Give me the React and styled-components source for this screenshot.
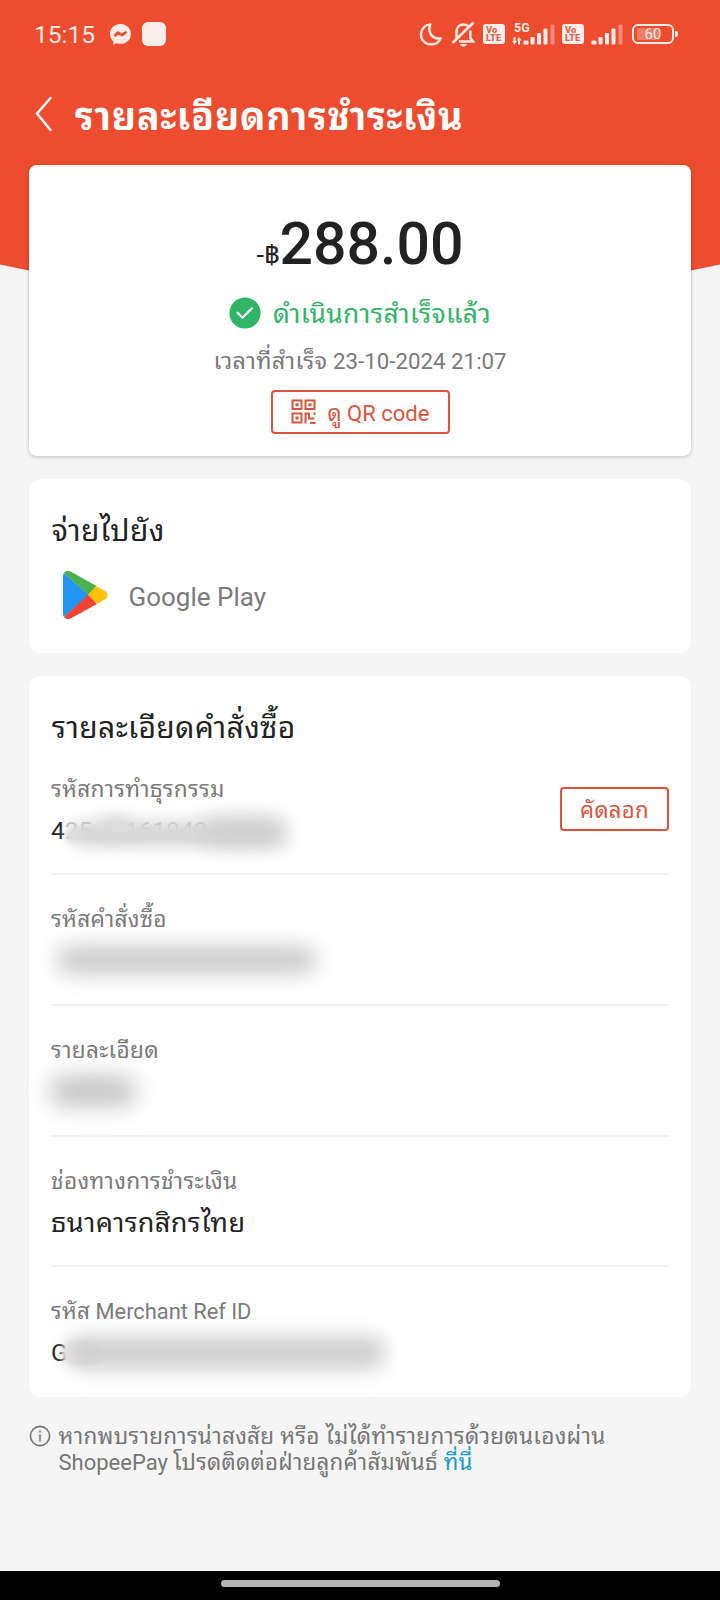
import React from "react";
import styled, { createGlobalStyle } from "styled-components";

const GlobalStyle = createGlobalStyle`
  * { box-sizing: border-box; }
  body {
    margin: 0;
    background: #f5f5f5;
    font-family: Roboto, "Noto Sans Thai Looped", "Noto Sans Thai", "Noto Sans", sans-serif;
    color: #222;
  }
`;

const Screen = styled.div`
  width: 720px;
  height: 1600px;
  display: flex;
  flex-direction: column;
  overflow: hidden;
  background: #f5f5f5;
`;

const Header = styled.header`
  height: 165px;
  background: #ed4c2e;
  color: #fff;
`;

const StatusBar = styled.div`
  height: 68px;
  padding: 0 42px 0 34px;
  display: flex;
  align-items: center;
  justify-content: space-between;
  color: #fdebe6;
`;

const StatusGroup = styled.div`
  display: flex;
  align-items: center;
  gap: ${(p) => p.$gap}px;
`;

const Clock = styled.span`
  font-size: 24.5px;
  line-height: 30px;
  margin-right: 4px;
  padding-top: 1px;
`;

const AppBadge = styled.span`
  width: 24px;
  height: 24px;
  border-radius: 6px;
  background: #fcefeb;
`;

const TitleBar = styled.div`
  height: 92px;
  padding-left: 35px;
  display: flex;
  align-items: center;
  gap: 22px;
`;

const Title = styled.h1`
  margin: 0;
  font-size: 37.5px;
  line-height: 48px;
  letter-spacing: 0.8px;
  font-weight: 700;
  padding-top: 5px;
  white-space: nowrap;
`;

const Backdrop = styled.svg`
  display: block;
  flex: none;
  height: 120px;
  margin-bottom: -120px;
`;

const Content = styled.main`
  flex: 1;
  display: flex;
  flex-direction: column;
  padding: 0 29px;
`;

const Card = styled.section`
  position: relative;
  flex: none;
  background: #fff;
  border-radius: ${(p) => p.$radius || 12}px;
  height: ${(p) => p.$height}px;
  margin-bottom: ${(p) => p.$gap}px;
  padding: ${(p) => p.$top}px 22px 0;
  box-shadow: ${(p) => (p.$raised ? "0 1px 4px rgba(0,0,0,.22)" : "none")};
`;

const Summary = styled.div`
  display: flex;
  flex-direction: column;
  align-items: center;
`;

const Amount = styled.div`
  height: 60px;
  font-size: 59px;
  line-height: 60px;
  font-weight: 500;
  white-space: nowrap;
  padding-top: 0.6px;
`;

const Currency = styled.span`
  font-size: 27px;
  font-weight: 400;
`;

const StatusLine = styled.div`
  height: 35px;
  margin-top: 22px;
  display: flex;
  align-items: center;
  gap: 12px;
  color: #30b566;
`;

const Text = styled.span`
  display: block;
  height: ${(p) => p.$line}px;
  font-size: ${(p) => p.$size}px;
  line-height: ${(p) => p.$line}px;
  color: ${(p) => p.$color || "inherit"};
  margin-top: ${(p) => p.$mt || 0}px;
  white-space: nowrap;
`;

const Thai = styled.span`
  font-size: ${(p) => p.$scale || 1.03}em;
  line-height: 1;
  letter-spacing: 0.013em;
`;

const OutlineButton = styled.button`
  width: ${(p) => p.$width}px;
  height: 44px;
  padding: 0;
  display: flex;
  align-items: center;
  justify-content: center;
  gap: 12px;
  border: 2px solid #e0533a;
  border-radius: 4px;
  background: #fff;
  color: #d9553c;
  font-family: inherit;
`;

const QrButton = styled(OutlineButton)`
  margin-top: 14px;
`;

const Heading = styled.h2`
  margin: 0;
  padding-left: 0.7px;
  height: 34px;
  font-size: 30px;
  line-height: 34px;
  letter-spacing: 0.4px;
  font-weight: 400;
  white-space: nowrap;
`;

const Merchant = styled.div`
  margin-top: 23px;
  padding-left: 12px;
  display: flex;
  align-items: center;
  gap: 20.5px;
`;

const Row = styled.div`
  height: 130.7px;
  padding-top: 30px;
  display: flex;
  justify-content: space-between;
  border-bottom: ${(p) => (p.$last ? "none" : "2px solid #f2f2f2")};
`;

const CopyButton = styled(OutlineButton)`
  margin-top: 12.6px;
`;

const Value = styled.div`
  position: relative;
  height: 40px;
  margin-top: 6px;
`;

const Faded = styled.span`
  color: #b4b4b4;
`;

const Smudge = styled.span`
  position: absolute;
  left: ${(p) => p.$x}px;
  top: ${(p) => p.$y}px;
  width: ${(p) => p.$w}px;
  height: ${(p) => p.$h}px;
  border-radius: 14px;
  background: ${(p) => p.$tone || "#c6c6c6"};
  filter: blur(${(p) => p.$blur || 11}px);
`;

const Notice = styled.p`
  margin: 0;
  display: flex;
  gap: 7.5px;
  color: #757575;
`;

const Link = styled.a`
  color: #1a9bd0;
`;

const NavBar = styled.footer`
  flex: none;
  height: 29px;
  background: #000;
  display: flex;
  justify-content: center;
  padding-top: 9px;
`;

const HomePill = styled.span`
  width: 279px;
  height: 7px;
  border-radius: 4px;
  background: #b3b3b3;
`;

const Messenger = () => (
  <svg width="21" height="21" viewBox="0 0 21 21">
    <path fill="currentColor" d="M10.5 0C4.6 0 0 4.300 0 10c0 3 1.200 5.500 3.300 7.300V20.700l3.400-1.500c1.200.4 2.500.6 3.800.6 5.900 0 10.400-4.200 10.400-9.900S16.400 0 10.500 0Z" />
    <path fill="none" stroke="#ed4c2e" strokeWidth="2.600" strokeLinejoin="round" d="M4.500 12.200 8 8.500l4.300 2.600 4.200-3.400" />
  </svg>
);

const MoonSvg = styled.svg`
  margin-right: 1px;
`;

const Moon = () => (
  <MoonSvg width="24" height="25" viewBox="0 0 25 25" fill="none" stroke="currentColor" strokeWidth="2.500" strokeLinejoin="round">
    <path d="M11.800 2C6.300 2.500 2 6.700 2 12.300c0 6 4.600 10.500 10.500 10.500 4.400 0 8.200-2.300 10.100-6.500-7.400 1.700-14.400-4.600-10.800-14.300Z" />
  </MoonSvg>
);

const BellOff = () => (
  <svg width="25" height="26" viewBox="0 0 25 26" fill="none" stroke="currentColor" strokeWidth="2.500">
    <path d="M5.500 18V11c0-4.500 3-7.500 7-7.500 1.800 0 3.300.5 4.500 1.500M19.300 9.500V17l2.700 3.600H8M1.500 22 22.500 1.500" />
    <path fill="currentColor" stroke="none" d="M9 23h7c-.5 1.700-1.800 2.600-3.500 2.600S9.500 24.700 9 23Z" />
  </svg>
);

const VolteBox = styled.span`
  width: 22px;
  height: 20px;
  border-radius: 3px;
  background: #fcefeb;
  color: #dc6650;
  display: flex;
  flex-direction: column;
  padding: 2px 0 0 3px;
  font-size: 9.3px;
  line-height: 8px;
  font-weight: 900;
`;

const Volte = () => (
  <VolteBox>
    <span>Vo</span>
    <span>LTE</span>
  </VolteBox>
);

const NetworkBox = styled.span`
  position: relative;
  display: block;
  height: 22px;
`;

const NetworkTag = styled.span`
  position: absolute;
  left: 2px;
  top: -1px;
  font-size: 12.5px;
  line-height: 12px;
  font-weight: 700;
`;

const Signal = ({ data }) => (
  <NetworkBox>
    {data && <NetworkTag>5G</NetworkTag>}
    <svg width={data ? 43 : 32} height="22" viewBox={data ? "-11 0 43 22" : "0 0 32 22"} fill="currentColor">
      {data && <path d="M-9.500 14h2v4h1.500l-2.500 3.500-2.500-3.500h1.500ZM-3 21.500h-2v-4h-1.500L-4 14l2.500 3.500H-3Z" />}
      <rect x="0.500" y="17.500" width="5" height="4" rx="1" />
      <rect x="7.500" y="14" width="4" height="7.500" rx="1" />
      <rect x="14" y="10" width="4" height="11.500" rx="1" />
      <rect x="20.500" y="5.500" width="4" height="16" rx="1" />
      <rect x="27.500" y="1.500" width="4" height="20" rx="1" opacity=".4" />
    </svg>
  </NetworkBox>
);

const BatteryShell = styled.span`
  position: relative;
  width: 42px;
  height: 20px;
  margin: 0 4px 0 2px;
  border: 2px solid currentColor;
  border-radius: 6px;
  display: flex;
  align-items: center;
  justify-content: center;
  font-size: 15px;
  line-height: 16px;
  background: linear-gradient(90deg, transparent 3px, #f27d66 3px, #f27d66 25px, transparent 25px) content-box;
  padding: 2px 0;
  &::after {
    content: "";
    position: absolute;
    right: -6px;
    top: 5px;
    width: 3px;
    height: 6px;
    border-radius: 0 2px 2px 0;
    background: currentColor;
  }
`;

const BackArrow = () => (
  <svg width="18" height="36" viewBox="0 0 18 36" fill="none" stroke="#fff" strokeWidth="2.500" strokeLinecap="round" strokeLinejoin="round">
    <path d="M15.500 2 2 17.500 15.500 34" />
  </svg>
);

const Check = () => (
  <svg width="32" height="32" viewBox="0 0 32 32">
    <circle cx="16" cy="16" r="15.600" fill="#30b566" />
    <path d="m8.500 15.800 5 5 9.500-9.600" fill="none" stroke="#fff" strokeWidth="2.300" strokeLinecap="round" strokeLinejoin="round" />
  </svg>
);

const QrIcon = () => (
  <svg width="25" height="25" viewBox="0 0 25 25" fill="none" stroke="currentColor" strokeWidth="2">
    <rect x="1.500" y="1.500" width="9" height="8.500" />
    <rect x="14.500" y="1.500" width="9" height="8.500" />
    <rect x="1.500" y="14.500" width="9" height="9" />
    <path d="M14.500 24.500V14.500h3.500v5h5.500M23.500 13.500v2.500M19 24h5.500" />
    <g fill="currentColor" stroke="none">
      <rect x="4.500" y="4.300" width="3" height="3" />
      <rect x="17.500" y="4.300" width="3" height="3" />
      <rect x="4.500" y="17.500" width="3" height="3" />
    </g>
  </svg>
);

const PlayLogo = () => (
  <svg width="45" height="48" viewBox="0 0 45 48">
    <path fill="#2196f3" d="M1 2C.300 3 0 4 0 5v38c0 1 .300 2 1 3l25-22Z" />
    <path fill="#4caf50" d="M1 2C2.800-.3 5.800-.5 8.500 1L33.500 15 25.500 24Z" />
    <path fill="#f44336" d="M1 46c1.800 2.300 4.800 2.500 7.500 1L34 33l-8.500-9.500Z" />
    <path fill="#ffc107" d="M33 15l9 5c3.500 2 3.500 6 0 8.300L34 33l-9-9Z" />
  </svg>
);

const InfoSvg = styled.svg`
  margin-top: 1px;
`;

const InfoIcon = () => (
  <InfoSvg width="22" height="22" viewBox="0 0 22 22" fill="none" stroke="currentColor" strokeWidth="1.600">
    <circle cx="11" cy="11" r="9.600" />
    <path d="M11 9.500v7M11 5.500v2" />
  </InfoSvg>
);

const grey = "#7a7a7a";

const orderRows = [
  {
    label: "รหัสการทำธุรกรรม",
    copy: true,
    value: "4",
    faded: "25\u2007\u2007\u2009161942",
    smudges: [
      { $x: 14, $y: 16, $w: 206, $h: 16, $blur: 3, $tone: "#e2e2e2" },
      { $x: 20, $y: 11, $w: 214, $h: 24, $blur: 9, $tone: "#d8d8d8" },
      { $x: 48, $y: 6, $w: 34, $h: 22, $blur: 7, $tone: "#dadada" },
      { $x: 150, $y: 8, $w: 84, $h: 24, $blur: 11, $tone: "#cecece" },
    ],
  },
  { label: "รหัสคำสั่งซื้อ", smudges: [{ $x: 5, $y: 6, $w: 260, $h: 26 }] },
  { label: "รายละเอียด", smudges: [{ $x: -1, $y: 5, $w: 86, $h: 28, $tone: "#bebebe", $blur: 12 }] },
  { label: "ช่องทางการชำระเงิน", thaiValue: "ธนาคารกสิกรไทย" },
  {
    label: "รหัส",
    latin: " Merchant Ref ID",
    value: "G",
    smudges: [
      { $x: 11, $y: 7, $w: 40, $h: 26, $blur: 2, $tone: "#ececec" },
      { $x: 16, $y: 3, $w: 318, $h: 33, $blur: 10, $tone: "#cfcfcf" },
    ],
  },
];

export default function App() {
  return (
    <Screen>
      <GlobalStyle />
      <Header>
        <StatusBar>
          <StatusGroup $gap={11}>
            <Clock>15:15</Clock>
            <Messenger />
            <AppBadge />
          </StatusGroup>
          <StatusGroup $gap={7}>
            <Moon />
            <BellOff />
            <Volte />
            <Signal data />
            <Volte />
            <Signal />
            <BatteryShell>60</BatteryShell>
          </StatusGroup>
        </StatusBar>
        <TitleBar>
          <BackArrow />
          <Title>รายละเอียดการชำระเงิน</Title>
        </TitleBar>
      </Header>
      <Backdrop width="720" height="120" viewBox="0 0 720 120">
        <path fill="#ed4c2e" d="M0 0H720V99.500Q360 180 0 99.500Z" />
      </Backdrop>
      <Content>
        <Card $radius={8} $height={291} $gap={23} $top={48} $raised>
          <Summary>
            <Amount>
              <Currency>-฿</Currency>288.00
            </Amount>
            <StatusLine>
              <Check />
              <Text $size={25.600} $line={35} $mt={4}><Thai>ดำเนินการสำเร็จแล้ว</Thai></Text>
            </StatusLine>
            <Text $size={22.300} $line={30} $mt={15.5} $color={grey}>
              <Thai $scale={1.05}>เวลาที่สำเร็จ</Thai> 23-10-2024 21:07
            </Text>
            <QrButton $width={179}>
              <QrIcon />
              <Text $size={22} $line={30} $mt={4}>ดู QR code</Text>
            </QrButton>
          </Summary>
        </Card>
        <Card $height={174} $gap={23} $top={35}>
          <Heading>จ่ายไปยัง</Heading>
          <Merchant>
            <PlayLogo />
            <Text $size={26} $line={40} $mt={3} $color={grey}>Google Play</Text>
          </Merchant>
        </Card>
        <Card $height={721} $gap={27} $top={34.6}>
          <Heading>รายละเอียดคำสั่งซื้อ</Heading>
          {orderRows.map((row, i) => (
            <Row key={row.label} $last={i === orderRows.length - 1}>
              <div>
                <Text $size={row.latin ? 21.800 : 22} $line={30} $color={grey}>
                  <Thai>{row.label}</Thai>
                  {row.latin}
                </Text>
                <Value>
                  <Text $size={row.thaiValue ? 26.300 : 24.500} $line={40}>
                    {row.value}
                    {row.faded && <Faded>{row.faded}</Faded>}
                    {row.thaiValue && <Thai>{row.thaiValue}</Thai>}
                  </Text>
                  {row.smudges?.map((s, k) => <Smudge key={k} {...s} />)}
                </Value>
              </div>
              {row.copy && (
                <CopyButton $width={109}>
                  <Text $size={21.500} $line={30} $mt={4}><Thai>คัดลอก</Thai></Text>
                </CopyButton>
              )}
            </Row>
          ))}
        </Card>
        <Notice>
          <InfoIcon />
          <span>
            <Text $size={22} $line={26}><Thai $scale={1.023}>หากพบรายการน่าสงสัย หรือ ไม่ได้ทำรายการด้วยตนเองผ่าน</Thai></Text>
            <Text $size={22} $line={26}>
              ShopeePay <Thai $scale={1.012}>โปรดติดต่อฝ่ายลูกค้าสัมพันธ์ <Link>ที่นี่</Link></Thai>
            </Text>
          </span>
        </Notice>
      </Content>
      <NavBar>
        <HomePill />
      </NavBar>
    </Screen>
  );
}
